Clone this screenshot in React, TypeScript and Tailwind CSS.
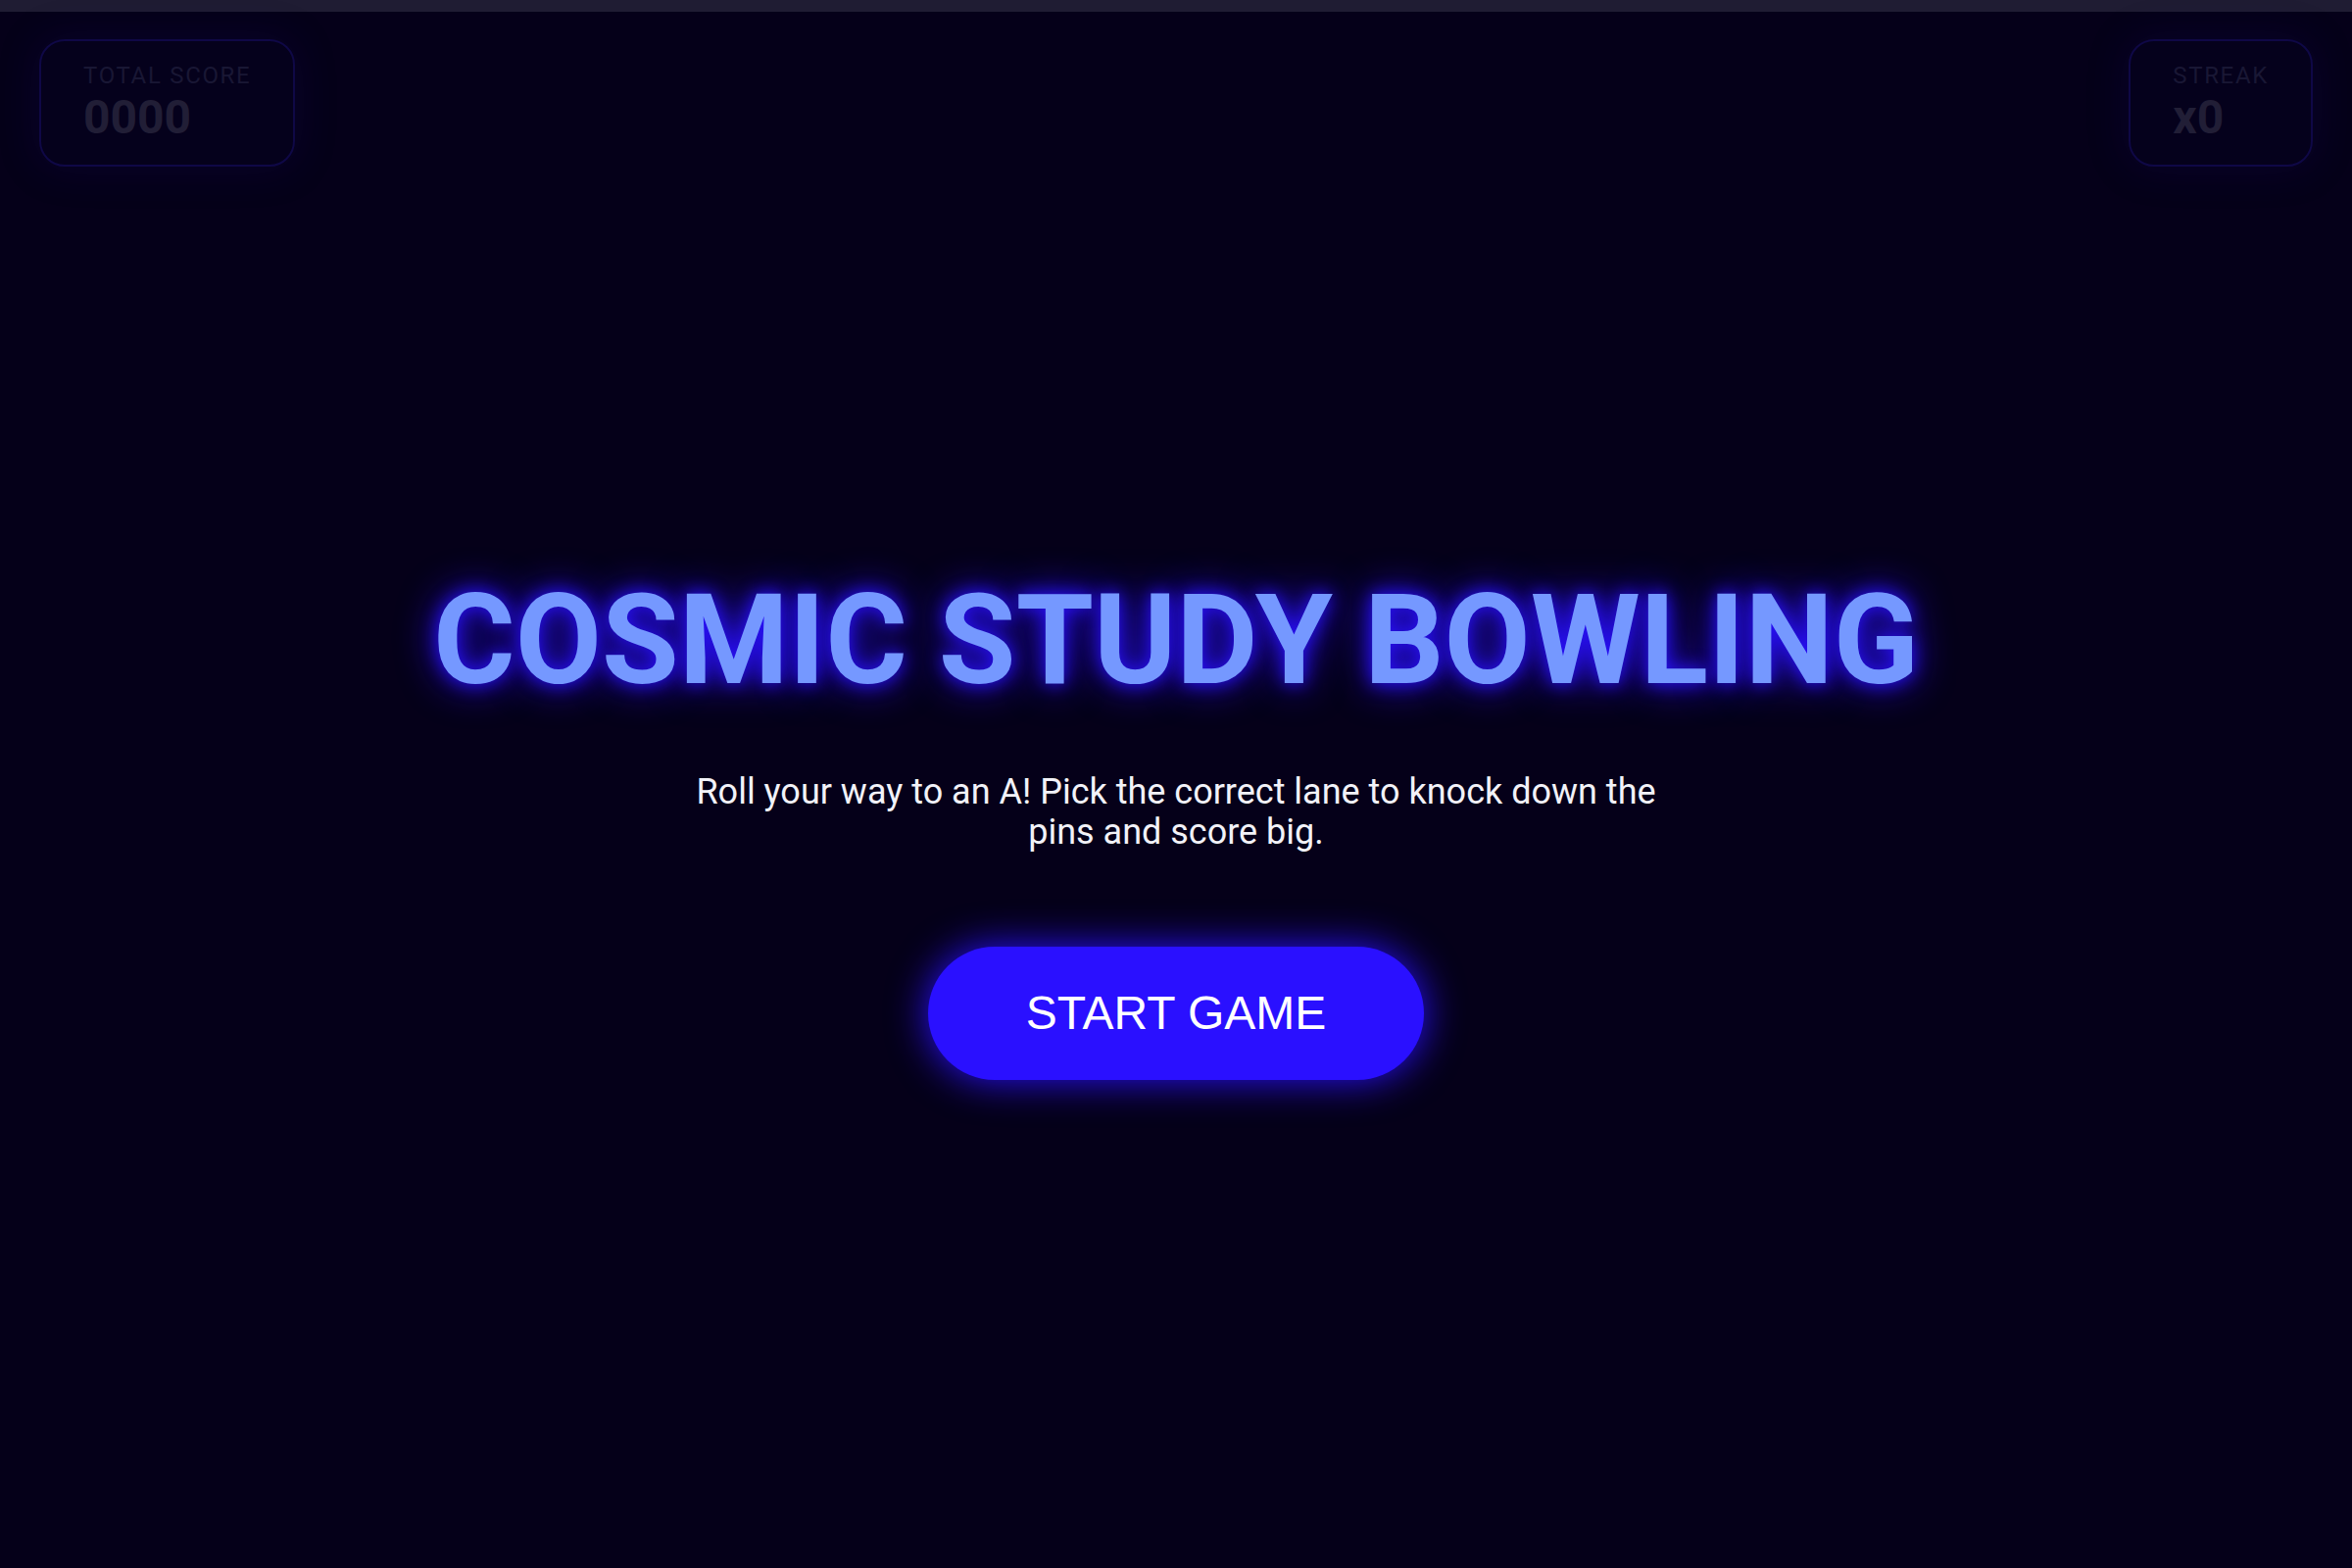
import React from 'react'

function HudCard({ label, value }: { label: string; value: string }) {
  return (
    <div className="rounded-[26px] border-2 border-[#0f0846] bg-[#05011c] px-[43px] pt-[21px] pb-[24px] shadow-[0_0_40px_rgba(20,10,90,0.3)]">
      <div className="text-[24px] leading-[28px] tracking-[0.07em] text-[#191734]">{label}</div>
      <div className="mt-[5px] text-[48px] font-bold leading-none text-[#211e36]">{value}</div>
    </div>
  )
}

export default function App() {
  return (
    <div
      className="flex h-screen flex-col bg-[#050019] text-white"
      style={{ fontFamily: 'Roboto, "Noto Sans", sans-serif' }}
    >
      <div className="h-[12px] w-full bg-[#1f1c33]" />

      <header className="flex items-start justify-between px-[40px] pt-[28px]">
        <HudCard label="TOTAL SCORE" value="0000" />
        <HudCard label="STREAK" value="x0" />
      </header>

      <main className="flex flex-1 flex-col items-center justify-center pb-[80px] text-center">
        <h1 className="text-[128px] font-bold leading-none text-[#7598ff] [text-shadow:0_0_18px_#2a10ff,0_0_40px_#2a10ff]">
          COSMIC STUDY BOWLING
        </h1>
        <p className="mt-[71px] max-w-[1010px] text-[36px] leading-[41px] text-[#f2f2f8]">
          Roll your way to an A! Pick the correct lane to knock down the pins and score big.
        </p>
        <button
          className="mt-[96px] flex h-[136px] items-center rounded-full bg-[#2a10ff] px-[100px] text-[48px] text-white shadow-[0_0_40px_#2a10ff]"
          style={{ fontFamily: '"Liberation Sans", Arial, sans-serif' }}
        >
          START GAME
        </button>
      </main>
    </div>
  )
}
